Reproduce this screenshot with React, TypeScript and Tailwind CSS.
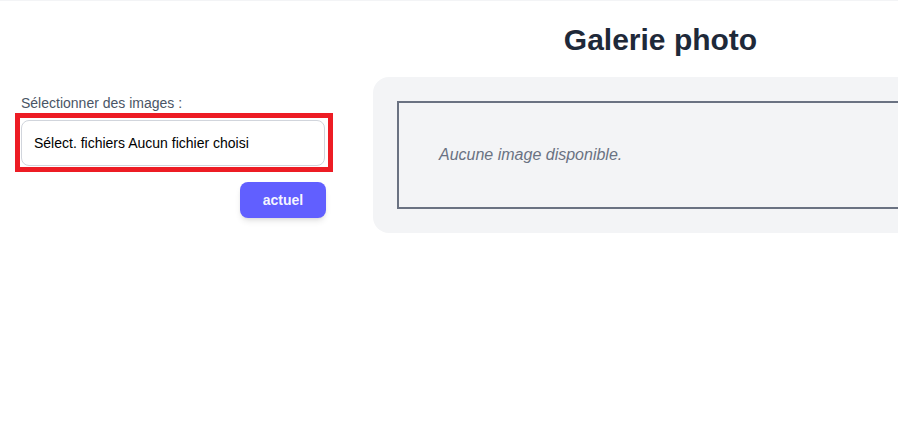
import React from 'react'

// Photo gallery page: upload form on the left, gallery panel on the right

const font = { fontFamily: '"Liberation Sans", Arial, sans-serif' }

const UploadForm: React.FC = () => (
  <div className="w-[318px] shrink-0 pt-[92px] flex flex-col">
    <label className="ml-[6px] text-sm leading-5 text-gray-600">Sélectionner des images :</label>

    {/* Highlighted file input */}
    <div className="border-[5px] border-[#ed1c24] pt-[2px] pb-[1px] pl-[1px]">
      <div className="w-[304px] h-[46px] flex items-center pl-[12px] border border-gray-300 rounded-lg bg-white text-sm text-black">
        Sélect. fichiers Aucun fichier choisi
      </div>
    </div>

    <div className="flex justify-end mt-[10px] mr-[7px]">
      <button className="w-[86px] h-[36px] rounded-lg bg-indigo-500 text-white/95 text-sm font-semibold shadow-md">
        actuel
      </button>
    </div>
  </div>
)

const Gallery: React.FC = () => (
  <div className="w-[575px] shrink-0 flex flex-col">
    <h1 className="mt-[21px] mb-[19px] text-center text-3xl font-bold text-gray-800">Galerie photo</h1>

    <div className="rounded-2xl bg-gray-100 p-6">
      <div className="border-2 border-gray-500 p-10">
        <p className="text-base italic text-gray-500">Aucune image disponible.</p>
      </div>
    </div>
  </div>
)

export default function App() {
  return (
    <div style={font} className="w-full h-[427px] overflow-hidden bg-white border-t border-gray-100">
      <div className="flex gap-10 pl-[15px]">
        <UploadForm />
        <Gallery />
      </div>
    </div>
  )
}
